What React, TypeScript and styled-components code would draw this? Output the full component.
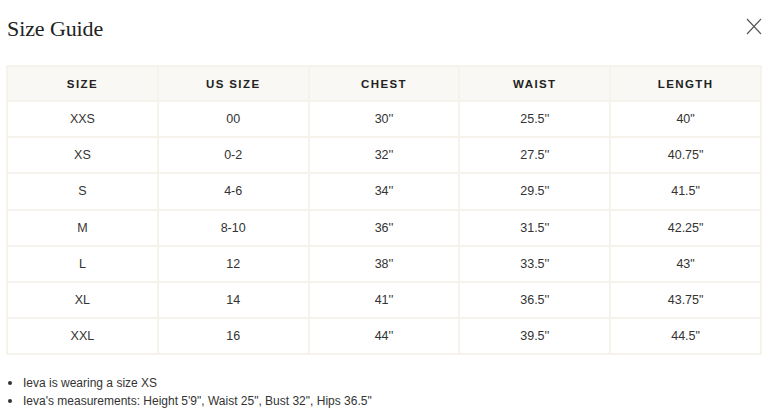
import React from "react";
import styled, { createGlobalStyle } from "styled-components";

const Global = createGlobalStyle`
  html, body { margin: 0; padding: 0; background: #fff; }
  body { font-family: "Liberation Sans", Arial, sans-serif; color: #222; }
`;

const Page = styled.div`
  width: 774px;
  height: 416px;
  box-sizing: border-box;
  padding: 13px 12px 0 6px;
  display: flex;
  flex-direction: column;
`;

const Header = styled.div`
  display: flex;
  justify-content: space-between;
  align-items: flex-start;
  height: 52px;
`;

const Title = styled.h2`
  margin: 0;
  padding-left: 1px;
  font-family: "Liberation Serif", "Times New Roman", serif;
  font-weight: 400;
  font-size: 22px;
  line-height: 32px;
  color: #222;
  letter-spacing: -0.1px;
`;

const Close = styled.button`
  border: 0;
  background: none;
  padding: 0;
  margin: 5px 0 0 0;
  width: 17px;
  height: 17px;
  cursor: pointer;
  display: flex;
`;

const Table = styled.table`
  width: 756px;
  border-collapse: collapse;
  table-layout: fixed;
  border: 2px solid #f6f3ec;
`;

const Th = styled.th`
  background: #faf8f4;
  height: 33px;
  padding: 0;
  font-size: 11.5px;
  font-weight: 700;
  letter-spacing: 1.4px;
  color: #222;
  text-align: center;
  border: 2px solid #f6f3ec;
`;

const Td = styled.td`
  height: 34.2px;
  padding: 0;
  font-size: 12.5px;
  color: #333;
  text-align: center;
  border: 2px solid #f6f3ec;
`;

const Notes = styled.ul`
  margin: 19px 0 0 0;
  padding: 0 0 0 17px;
  list-style: disc;
  font-size: 12px;
  line-height: 18px;
  color: #333;
  li::marker { font-size: 13px; }
`;

const rows = [
  ["XXS", "00", "30''", "25.5''", '40"'],
  ["XS", "0-2", "32''", "27.5''", '40.75"'],
  ["S", "4-6", "34''", "29.5''", '41.5"'],
  ["M", "8-10", "36''", "31.5''", '42.25"'],
  ["L", "12", "38''", "33.5''", '43"'],
  ["XL", "14", "41''", "36.5''", '43.75"'],
  ["XXL", "16", "44''", "39.5''", '44.5"'],
];

export default function App() {
  return (
    <>
      <Global />
      <Page>
        <Header>
          <Title>Size Guide</Title>
          <Close aria-label="Close">
            <svg width="17" height="17" viewBox="0 0 17 17">
              <path d="M2 1 L16 16 M16 1 L2 16" stroke="#555" strokeWidth="1.1" fill="none" />
            </svg>
          </Close>
        </Header>
        <Table>
          <thead>
            <tr>
              {["SIZE", "US SIZE", "CHEST", "WAIST", "LENGTH"].map((h) => (
                <Th key={h}>{h}</Th>
              ))}
            </tr>
          </thead>
          <tbody>
            {rows.map((r) => (
              <tr key={r[0]}>
                {r.map((c, i) => (
                  <Td key={i}>{c}</Td>
                ))}
              </tr>
            ))}
          </tbody>
        </Table>
        <Notes>
          <li>Ieva is wearing a size XS</li>
          <li>Ieva's measurements: Height 5'9", Waist 25", Bust 32", Hips 36.5"</li>
        </Notes>
      </Page>
    </>
  );
}
